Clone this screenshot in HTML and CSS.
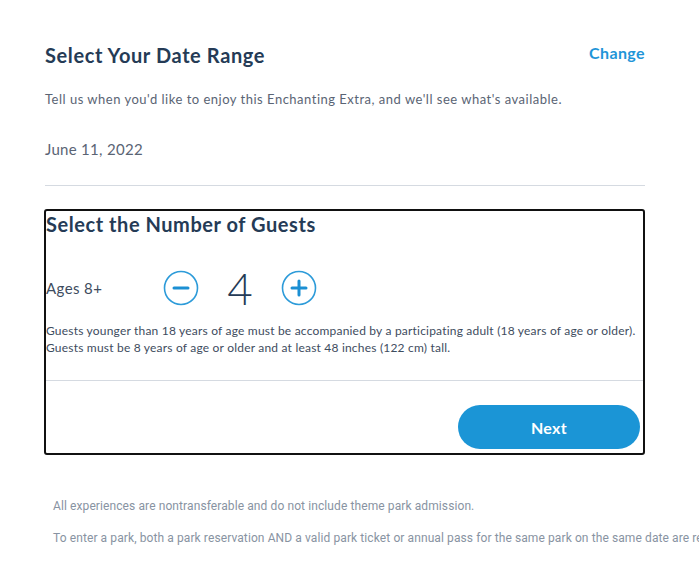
FILE: index.html
```html
<!DOCTYPE html>
<html lang="en">
<head>
  <meta charset="UTF-8">
  <meta name="viewport" content="width=device-width, initial-scale=1.0">
  <title>Enchanting Extras - Select Your Date Range</title>
  <link rel="stylesheet" href="styles.css">
</head>
<body>
  <main class="booking">
    <section class="date-range">
      <div class="section-head">
        <h2 class="section-title">Select Your Date Range</h2>
        <a class="change-link" href="#">Change</a>
      </div>
      <p class="section-intro">Tell us when you'd like to enjoy this Enchanting Extra, and we'll see what's available.</p>
      <p class="selected-date">June 11, 2022</p>
    </section>

    <section class="guest-card">
      <h2 class="card-title">Select the Number of Guests</h2>

      <div class="guest-row">
        <span class="guest-label">Ages 8+</span>
        <div class="stepper">
          <button class="step-btn" type="button" aria-label="Remove guest">
            <svg width="36" height="36" viewBox="0 0 36 36">
              <circle cx="18" cy="18" r="16.5" fill="none" stroke="#2d9bd9" stroke-width="1.6"/>
              <line x1="11" y1="18" x2="25" y2="18" stroke="#1b8fd3" stroke-width="3" stroke-linecap="round"/>
            </svg>
          </button>
          <span class="guest-count">4</span>
          <button class="step-btn" type="button" aria-label="Add guest">
            <svg width="36" height="36" viewBox="0 0 36 36">
              <circle cx="18" cy="18" r="16.5" fill="none" stroke="#2d9bd9" stroke-width="1.6"/>
              <line x1="11" y1="18" x2="25" y2="18" stroke="#1b8fd3" stroke-width="3" stroke-linecap="round"/>
              <line x1="18" y1="11" x2="18" y2="25" stroke="#1b8fd3" stroke-width="3" stroke-linecap="round"/>
            </svg>
          </button>
        </div>
      </div>

      <p class="guest-note">
        Guests younger than 18 years of age must be accompanied by a participating adult (18 years of age or older).<br>
        Guests must be 8 years of age or older and at least 48 inches (122 cm) tall.
      </p>

      <div class="card-actions">
        <button class="next-btn" type="button">Next</button>
      </div>
    </section>

    <footer class="disclaimers">
      <p>All experiences are nontransferable and do not include theme park admission.</p>
      <p>To enter a park, both a park reservation AND a valid park ticket or annual pass for the same park on the same date are required for guests ages 3 and up.</p>
    </footer>
  </main>
</body>
</html>
```

FILE: styles.css
```css
body {
  margin: 0;
  font-family: 'Lato', 'Noto Sans', sans-serif;
  color: #253b56;
  background: #fff;
  overflow: hidden;
}
.booking {
  width: 600px;
  padding: 43px 0 0 45px;
}
.section-head {
  display: flex;
  justify-content: space-between;
  align-items: flex-start;
}
.section-title {
  margin: 0;
  font-size: 20px;
  line-height: 24px;
  font-weight: 700;
  letter-spacing: 0.6px;
  color: #253b56;
}
.change-link {
  margin-top: -2px;
  font-size: 16px;
  line-height: 24px;
  font-weight: 700;
  letter-spacing: 0.4px;
  color: #1f95d8;
  text-decoration: none;
}
.section-intro {
  margin: 23px 0 0;
  font-size: 13px;
  line-height: 18px;
  letter-spacing: 0.5px;
  color: #5a6474;
}
.selected-date {
  margin: 31px 0 0;
  padding-bottom: 26px;
  font-size: 15px;
  line-height: 20px;
  letter-spacing: 0.3px;
  color: #5a6474;
  border-bottom: 1px solid #d5dae1;
}
.guest-card {
  margin: 23px 0 0 -1px;
  border: 2px solid #111;
  border-radius: 3px;
  padding: 1px 0 4px;
}
.card-title {
  margin: 0;
  font-size: 20px;
  line-height: 24px;
  font-weight: 700;
  letter-spacing: 0.55px;
  color: #253b56;
}
.guest-row {
  display: flex;
  align-items: center;
  margin-top: 34px;
  height: 36px;
}
.guest-label {
  width: 117px;
  font-size: 15px;
  letter-spacing: 0.4px;
  color: #3e4c5e;
}
.stepper {
  display: flex;
  align-items: center;
}
.step-btn {
  padding: 0;
  border: 0;
  background: none;
  width: 36px;
  height: 36px;
}
.guest-count {
  width: 82px;
  text-align: center;
  font-size: 44px;
  line-height: 36px;
  font-weight: 300;
  color: #253b56;
}
.guest-note {
  margin: 16px 0 0;
  font-size: 12px;
  line-height: 17px;
  letter-spacing: 0.2px;
  color: #3e4c5e;
  padding-bottom: 24px;
  border-bottom: 1px solid #d5dae1;
}
.card-actions {
  display: flex;
  justify-content: flex-end;
  padding: 24px 3px 0 0;
}
.next-btn {
  width: 182px;
  height: 44px;
  border: 0;
  border-radius: 22px;
  background: #1b95d6;
  color: #fff;
  font-family: inherit;
  font-size: 16px;
  font-weight: 700;
  letter-spacing: 0.3px;
}
.disclaimers {
  margin: 43px 0 0 8px;
  font-family: 'Roboto', sans-serif;
  font-size: 12px;
  line-height: 16px;
  letter-spacing: 0.1px;
  color: #8893a2;
  white-space: nowrap;
}
.disclaimers p {
  margin: 0 0 16px;
}
```
